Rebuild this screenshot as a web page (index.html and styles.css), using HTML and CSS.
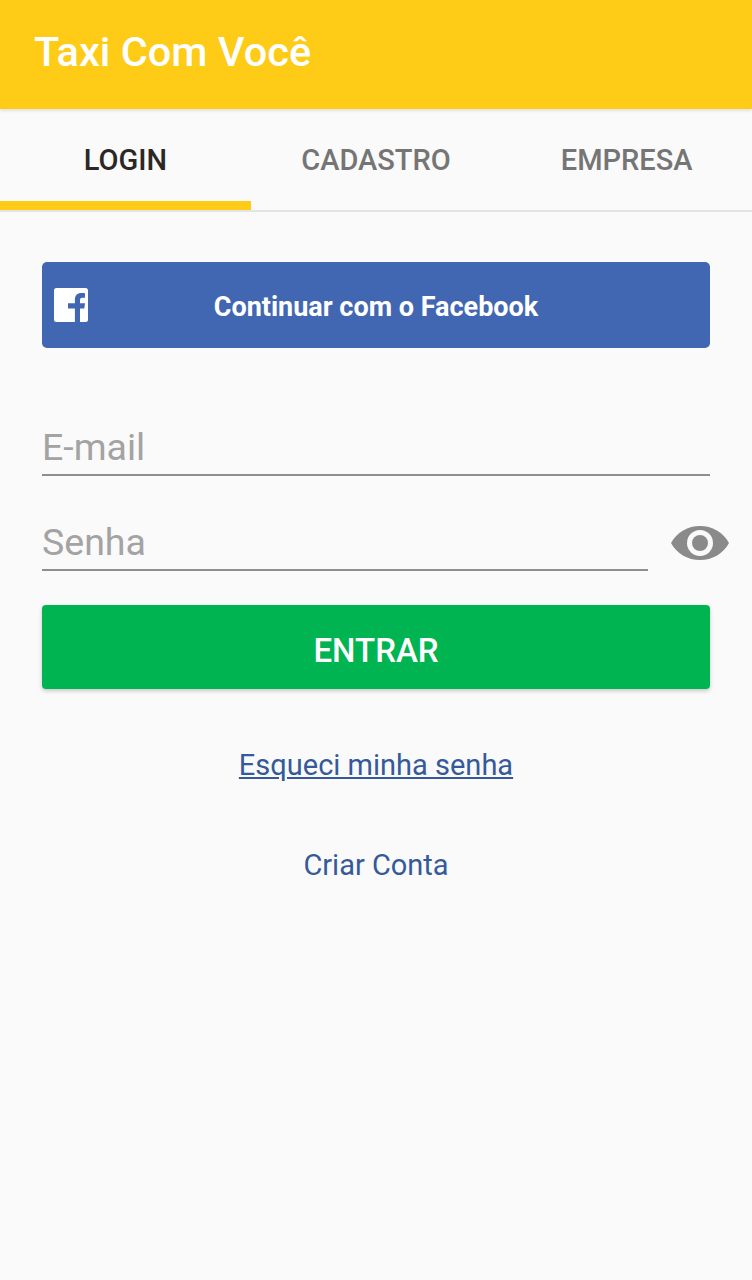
FILE: index.html
```html
<!DOCTYPE html>
<html lang="pt-BR">
<head>
  <meta charset="UTF-8" />
  <title>Taxi Com Você</title>
  <link rel="stylesheet" href="styles.css">
</head>
<body>

  <header class="topo">
    <h1>Taxi Com Você</h1>
  </header>

  <nav class="abas">
    <a href="#" class="aba ativa">LOGIN</a>
    <a href="#" class="aba">CADASTRO</a>
    <a href="#" class="aba">EMPRESA</a>
  </nav>

  <main class="conteudo">
    <button type="button" class="btn-facebook">
      <svg class="icone-fb" viewBox="0 0 34 34" width="34" height="34">
        <path fill="#fff" fill-rule="evenodd" d="M2.500 0h29A2.500 2.500 0 0 1 34 2.500v29a2.500 2.500 0 0 1-2.500 2.500H26V20.500h4.300l.7-5.200h-5v-3.100c0-1.500.4-2.500 2.500-2.500H31V5.200c-.5-.1-2-.2-3.800-.2-3.900 0-6.300 2.400-6.300 6.500v3.800H14v5.200h6.900V34H2.500A2.500 2.500 0 0 1 0 31.500v-29A2.500 2.500 0 0 1 2.500 0z"/>
      </svg>
      <span>Continuar com o Facebook</span>
    </button>

    <div class="campo campo-email">
      <span class="placeholder">E-mail</span>
    </div>

    <div class="linha-senha">
      <div class="campo campo-senha">
        <span class="placeholder">Senha</span>
      </div>
      <svg class="icone-olho" viewBox="0 0 58 34" width="58" height="34">
        <path fill="#8a8a8a" d="M0 17C6 6 17 0 29 0s23 6 29 17c-6 11-17 17-29 17S6 28 0 17z"/>
        <circle cx="29" cy="17" r="13" fill="#fafafa"/>
        <circle cx="29" cy="17" r="8" fill="#8a8a8a"/>
      </svg>
    </div>

    <button type="button" class="btn-entrar">ENTRAR</button>

    <a href="#" class="link link-esqueci">Esqueci minha senha</a>
    <a href="#" class="link link-criar">Criar Conta</a>
  </main>

</body>
</html>
```

FILE: styles.css
```css
* {
  box-sizing: border-box;
}

body {
  margin: 0;
  height: 1280px;
  background-color: #fafafa;
  font-family: Roboto, "Liberation Sans", sans-serif;
  overflow: hidden;
}

.topo {
  height: 109px;
  padding-left: 34px;
  display: flex;
  align-items: center;
  background-color: #fecb16;
  box-shadow: 0 1px 4px rgba(0, 0, 0, 0.15);
}

.topo h1 {
  margin: 0 0 6px;
  font-size: 41.5px;
  font-weight: 500;
  color: #fff;
}

.abas {
  display: flex;
  height: 103px;
  border-bottom: 2px solid #e4e4e4;
}

.aba {
  flex: 1;
  height: 101px;
  padding-top: 34px;
  text-align: center;
  text-decoration: none;
  font-size: 29px;
  font-weight: 500;
  color: #757575;
}

.aba.ativa {
  color: #2b2725;
  border-bottom: 9px solid #fecb16;
}

.conteudo {
  display: flex;
  flex-direction: column;
  padding: 50px 42px 0;
}

.btn-facebook {
  display: flex;
  align-items: center;
  height: 86px;
  padding: 0 0 0 12px;
  border: none;
  border-radius: 5px;
  background-color: #4267b2;
  color: #fff;
  font-family: inherit;
  font-size: 27px;
  font-weight: 700;
}

.btn-facebook span {
  flex: 1;
  padding: 3px 46px 0 0;
  text-align: center;
}

.campo {
  height: 50px;
  border-bottom: 2px solid #8e8e8e;
}

.campo-email {
  margin-top: 78px;
}

.placeholder {
  font-size: 37.5px;
  line-height: 42px;
  color: #a3a3a3;
}

.linha-senha {
  display: flex;
  align-items: center;
  margin: 45px -19px 0 0;
}

.campo-senha {
  width: 606px;
}

.icone-olho {
  margin-left: 23px;
  margin-bottom: 6px;
}

.btn-entrar {
  height: 84px;
  margin-top: 34px;
  padding-top: 8px;
  border: none;
  border-radius: 4px;
  background-color: #00b551;
  box-shadow: 0 2px 4px rgba(0, 0, 0, 0.2);
  color: #fff;
  font-family: inherit;
  font-size: 33px;
  font-weight: 500;
}

.link {
  align-self: center;
  color: #355a9a;
  font-size: 29px;
}

.link-esqueci {
  margin-top: 59px;
}

.link-criar {
  margin-top: 66px;
  text-decoration: none;
}
```
